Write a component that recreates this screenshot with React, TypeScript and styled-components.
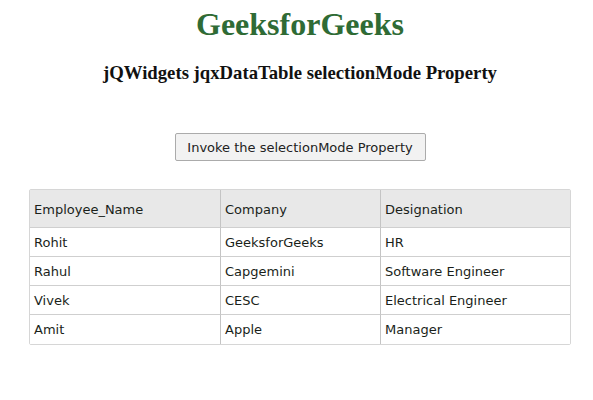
import React from 'react';
import styled, { createGlobalStyle } from 'styled-components';

const GlobalStyle = createGlobalStyle`
  body {
    margin: 0;
    background: #ffffff;
    font-family: "Liberation Serif", "Times New Roman", serif;
  }
`;

const Page = styled.div`
  width: 600px;
  height: 400px;
  padding-top: 6px;
  box-sizing: border-box;
  display: flex;
  flex-direction: column;
  align-items: center;
`;

const Title = styled.h1`
  margin: 0;
  font-size: 32px;
  line-height: 37px;
  font-weight: bold;
  color: #2f6b35;
`;

const Subtitle = styled.h3`
  margin: 19px 0 0;
  font-size: 18.72px;
  line-height: 22px;
  font-weight: bold;
  color: #111;
`;

const Button = styled.button`
  margin-top: 49px;
  width: 251px;
  height: 28px;
  padding: 0;
  background: #f2f2f2;
  border: 1px solid #ababab;
  border-radius: 2px;
  font-family: "DejaVu Sans", Verdana, sans-serif;
  font-size: 13px;
  color: #222;
`;

const Table = styled.div`
  margin-top: 28px;
  width: 542px;
  box-sizing: border-box;
  border: 1px solid #d6d6d6;
  border-radius: 2px;
  display: grid;
  grid-template-columns: 191px 160px 1fr;
  font-family: "DejaVu Sans", Verdana, sans-serif;
  font-size: 13px;
  color: #1a1f1a;
`;

const Cell = styled.div<{ $head?: boolean; $last?: boolean; $lastRow?: boolean }>`
  height: ${({ $head }) => ($head ? '38px' : '29px')};
  box-sizing: border-box;
  display: flex;
  align-items: center;
  padding-left: 4px;
  padding-top: ${({ $head }) => ($head ? '2px' : '0')};
  background: ${({ $head }) => ($head ? '#e8e8e8' : '#fff')};
  border-right: ${({ $last }) => ($last ? 'none' : '1px solid #c4c4c4')};
  border-bottom: ${({ $lastRow }) => ($lastRow ? 'none' : '1px solid #cfcfcf')};
`;

const columns = ['Employee_Name', 'Company', 'Designation'];
const rows = [
  ['Rohit', 'GeeksforGeeks', 'HR'],
  ['Rahul', 'Capgemini', 'Software Engineer'],
  ['Vivek', 'CESC', 'Electrical Engineer'],
  ['Amit', 'Apple', 'Manager'],
];

export default function App() {
  return (
    <>
      <GlobalStyle />
      <Page>
        <Title>GeeksforGeeks</Title>
        <Subtitle>jQWidgets jqxDataTable selectionMode Property</Subtitle>
        <Button>Invoke the selectionMode Property</Button>
        <Table>
          {columns.map((c, i) => (
            <Cell key={c} $head $last={i === 2}>{c}</Cell>
          ))}
          {rows.map((r, ri) =>
            r.map((v, ci) => (
              <Cell key={ri + '-' + ci} $last={ci === 2} $lastRow={ri === rows.length - 1}>
                {v}
              </Cell>
            ))
          )}
        </Table>
      </Page>
    </>
  );
}
